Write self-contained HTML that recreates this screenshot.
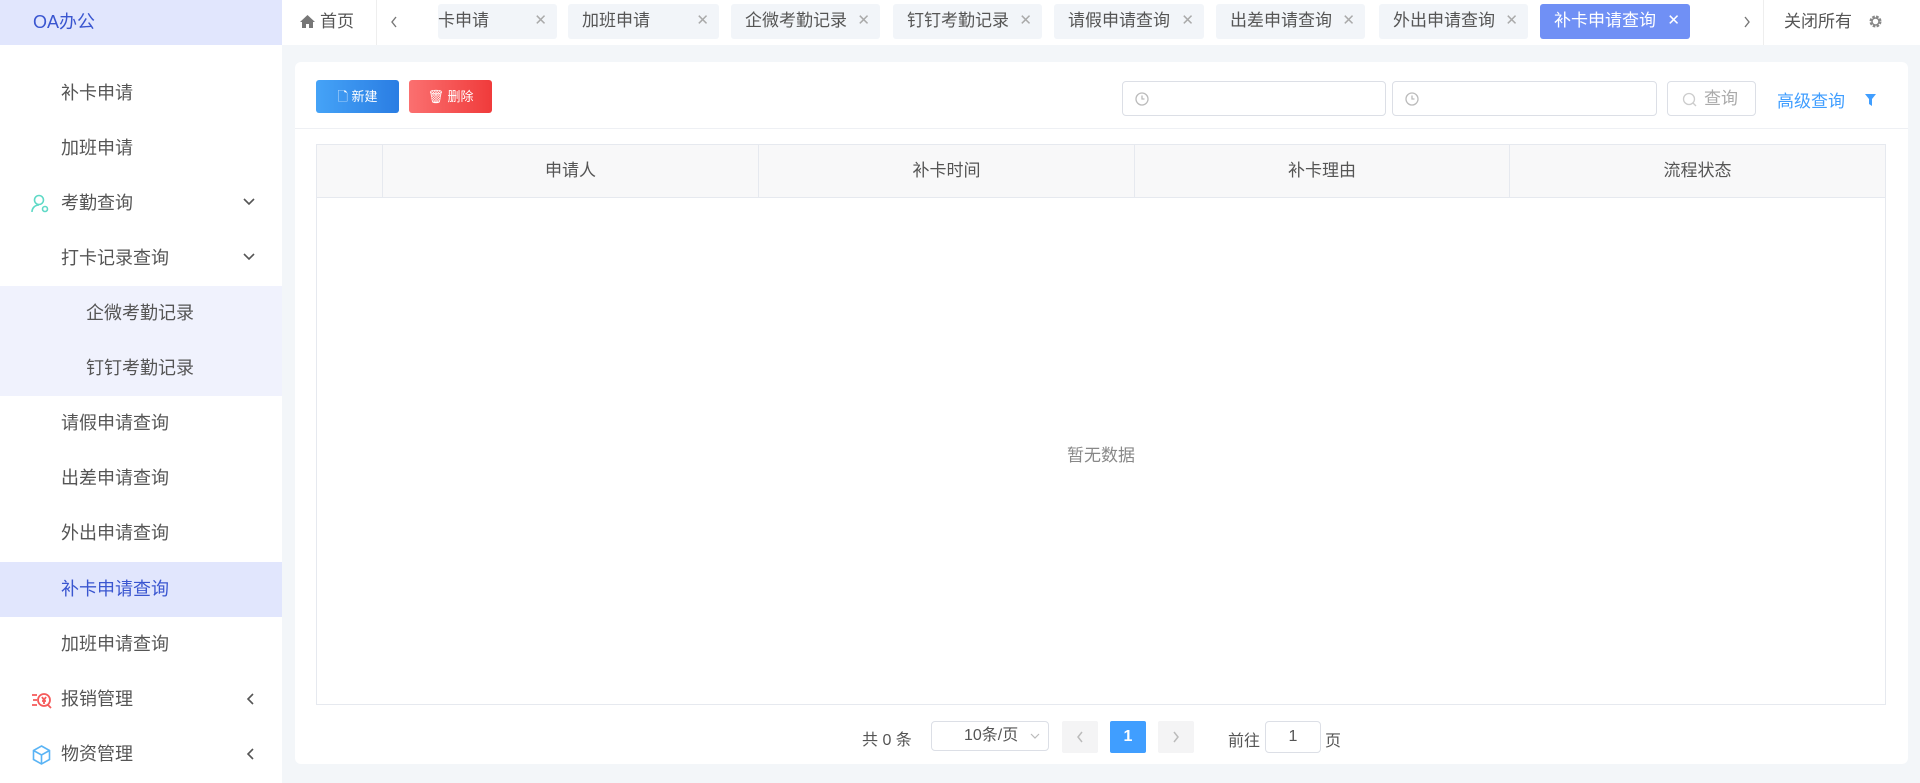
<!DOCTYPE html>
<html><head><meta charset="utf-8"><style>
*{box-sizing:border-box;margin:0;padding:0}
body{width:1920px;height:783px;overflow:hidden;background:#f3f6f9;font-family:"Liberation Sans","Noto Sans CJK SC",sans-serif;color:#555;position:relative}
.abs{position:absolute}
#side{left:0;top:0;width:282px;height:783px;background:#fff}
#logo{left:0;top:0;width:282px;height:45px;background:#e1e6fd;color:#3a56d0;font-size:18px;line-height:45px;padding-left:33px}
.mi{position:absolute;left:0;width:282px;height:55px;line-height:55px;font-size:18px;color:#555}
.chev{position:absolute;right:26px;top:21px}
#top{left:282px;top:0;width:1638px;height:45px;background:#fff}
.tab{position:absolute;top:4px;height:35px;line-height:34px;background:#f2f5f9;border-radius:3px;font-size:17px;color:#555;padding-left:14px}
.tab .x{position:absolute;right:10px;top:0;color:#aaa;font-size:15px}
#card{left:295px;top:62px;width:1613px;height:702px;background:#fff;border-radius:6px}
.btn{position:absolute;top:80px;height:33px;width:83px;border-radius:3px;color:#fff;font-size:13px;line-height:33px;text-align:center}
.inp{position:absolute;top:81px;height:35px;border:1px solid #dcdfe6;border-radius:4px;background:#fff}
.th{position:absolute;top:144px;height:54px;line-height:54px;text-align:center;font-size:17px;color:#555;border-right:1px solid #e6e9ef}
</style></head><body>
<div id="side" class="abs">
<div id="logo" class="abs">OA办公</div>
<div class="mi" style="top:66px;padding-left:61px">补卡申请</div>
<div class="mi" style="top:121px;padding-left:61px">加班申请</div>
<div class="mi" style="top:176px;padding-left:61px"><svg class="abs" style="left:31px;top:18px" width="19" height="19" viewBox="0 0 19 19" fill="none" stroke="#5fd9c6" stroke-width="1.6"><circle cx="8" cy="6" r="4.5"/><path d="M1 18c0-4 3-7 7-7"/><circle cx="14" cy="15" r="2.5"/></svg>考勤查询<svg class="chev" width="14" height="10" viewBox="0 0 14 10"><path d="M2 2l5 5 5-5" fill="none" stroke="#555" stroke-width="1.6"/></svg></div>
<div class="mi" style="top:231px;padding-left:61px">打卡记录查询<svg class="chev" width="14" height="10" viewBox="0 0 14 10"><path d="M2 2l5 5 5-5" fill="none" stroke="#555" stroke-width="1.6"/></svg></div>
<div class="mi" style="top:286px;height:110px;background:#f0f2fd"></div>
<div class="mi" style="top:286px;padding-left:86px">企微考勤记录</div>
<div class="mi" style="top:341px;padding-left:86px">钉钉考勤记录</div>
<div class="mi" style="top:396px;padding-left:61px">请假申请查询</div>
<div class="mi" style="top:451px;padding-left:61px">出差申请查询</div>
<div class="mi" style="top:506px;padding-left:61px">外出申请查询</div>
<div class="mi" style="top:562px;padding-left:61px;background:#e1e6fd;color:#3a56d0">补卡申请查询</div>
<div class="mi" style="top:617px;padding-left:61px">加班申请查询</div>
<div class="mi" style="top:672px;padding-left:61px"><svg class="abs" style="left:31px;top:19px" width="21" height="18" viewBox="0 0 21 18" fill="none" stroke="#f55a5a" stroke-width="1.8"><path d="M1 4h5M2 9h4M1 14h5"/><circle cx="13" cy="9" r="6"/><path d="M11 6l2 3 2-3M11 10h4M13 9v4M17 14l3 3"/></svg>报销管理<svg class="chev" style="top:20px" width="10" height="14" viewBox="0 0 10 14"><path d="M7 2L2 7l5 5" fill="none" stroke="#555" stroke-width="1.6"/></svg></div>
<div class="mi" style="top:727px;padding-left:61px"><svg class="abs" style="left:32px;top:18px" width="19" height="20" viewBox="0 0 19 20" fill="none" stroke="#5ab4f5" stroke-width="1.6"><path d="M9.5 1l8 4.5v9l-8 4.5-8-4.5v-9z M1.5 5.5l8 4.5 8-4.5 M9.5 10v9"/></svg>物资管理<svg class="chev" style="top:20px" width="10" height="14" viewBox="0 0 10 14"><path d="M7 2L2 7l5 5" fill="none" stroke="#555" stroke-width="1.6"/></svg></div>
</div>
<div id="top" class="abs">
<svg class="abs" style="left:18px;top:15px" width="15" height="13" viewBox="0 0 15 13"><path d="M7.5 0L0 7h2v6h4V9h3v4h4V7h2z" fill="#777"/></svg>
<div class="abs" style="left:38px;top:0;line-height:44px;font-size:17px;color:#555">首页</div>
<div class="abs" style="left:94px;top:0;width:1px;height:45px;background:#eee"></div>
<svg class="abs" style="left:108px;top:15px" width="8" height="14" viewBox="0 0 8 14"><path d="M6 2L2 7l4 5" fill="none" stroke="#777" stroke-width="1.4"/></svg>
<div class="tab" style="left:156px;width:119px;padding-left:0">卡申请<span class="x">✕</span></div>
<div class="tab" style="left:286px;width:151px">加班申请<span class="x">✕</span></div>
<div class="tab" style="left:449px;width:149px">企微考勤记录<span class="x">✕</span></div>
<div class="tab" style="left:611px;width:149px">钉钉考勤记录<span class="x">✕</span></div>
<div class="tab" style="left:772px;width:150px">请假申请查询<span class="x">✕</span></div>
<div class="tab" style="left:934px;width:149px">出差申请查询<span class="x">✕</span></div>
<div class="tab" style="left:1097px;width:149px">外出申请查询<span class="x">✕</span></div>
<div class="tab" style="left:1258px;width:150px;background:#7090f5;color:#fff">补卡申请查询<span class="x" style="color:#fff">✕</span></div>
<svg class="abs" style="left:1461px;top:15px" width="8" height="14" viewBox="0 0 8 14"><path d="M2 2l4 5-4 5" fill="none" stroke="#777" stroke-width="1.4"/></svg>
<div class="abs" style="left:1481px;top:0;width:1px;height:45px;background:#eee"></div>
<div class="abs" style="left:1502px;top:0;line-height:44px;font-size:17px;color:#555">关闭所有</div>
<svg class="abs" style="left:1586px;top:14px" width="15" height="15" viewBox="0 0 15 15"><circle cx="7.5" cy="7.5" r="4.5" fill="none" stroke="#888" stroke-width="3" stroke-dasharray="2.4 1.2"/><circle cx="7.5" cy="7.5" r="3.5" fill="none" stroke="#888" stroke-width="1.5"/></svg>
</div>
<div id="card" class="abs"></div>
<div class="btn" style="left:316px;background:linear-gradient(90deg,#45a3f7,#2a7de3)">🗋 新建</div>
<div class="btn" style="left:409px;background:linear-gradient(90deg,#fb7070,#f03b3b)">🗑 删除</div>
<div class="inp" style="left:1122px;width:264px"><svg class="abs" style="left:12px;top:10px" width="14" height="14" viewBox="0 0 14 14" fill="none" stroke="#bbb" stroke-width="1.3"><circle cx="7" cy="7" r="6"/><path d="M7 3.5V7h2.5"/></svg></div>
<div class="inp" style="left:1392px;width:265px"><svg class="abs" style="left:12px;top:10px" width="14" height="14" viewBox="0 0 14 14" fill="none" stroke="#bbb" stroke-width="1.3"><circle cx="7" cy="7" r="6"/><path d="M7 3.5V7h2.5"/></svg></div>
<div class="inp" style="left:1667px;width:89px;line-height:33px;font-size:17px;color:#aaa;padding-left:36px"><svg class="abs" style="left:14px;top:10px" width="15" height="15" viewBox="0 0 15 15"><circle cx="7" cy="7" r="5.5" fill="none" stroke="#ccc" stroke-width="1.3"/><path d="M11 11l3 3" stroke="#ccc" stroke-width="1.3"/></svg>查询</div>
<div class="abs" style="left:1777px;top:87px;font-size:17px;color:#409eff">高级查询</div>
<svg class="abs" style="left:1865px;top:94px" width="11" height="12" viewBox="0 0 11 12"><path d="M0 0h11L7 5v7L4 10V5z" fill="#409eff"/></svg>
<div class="abs" style="left:295px;top:128px;width:1613px;height:1px;background:#eef0f4"></div>
<div class="abs" style="left:316px;top:144px;width:1570px;height:561px;border:1px solid #e6e9ef"></div>
<div class="abs" style="left:317px;top:145px;width:1568px;height:53px;background:#f8f8f9;border-bottom:1px solid #e6e9ef"></div>
<div class="th" style="left:317px;width:66px"></div>
<div class="th" style="left:383px;width:376px">申请人</div>
<div class="th" style="left:759px;width:376px">补卡时间</div>
<div class="th" style="left:1135px;width:375px">补卡理由</div>
<div class="th" style="left:1510px;width:375px;border:none">流程状态</div>
<div class="abs" style="left:1067px;top:441px;font-size:17px;color:#888">暂无数据</div>
<div class="abs" style="left:862px;top:726px;font-size:16px;color:#555">共 0 条</div>
<div class="abs" style="left:931px;top:721px;width:118px;height:30px;border:1px solid #dcdfe6;border-radius:4px;font-size:16px;line-height:28px;padding-left:32px;color:#555">10条/页<svg class="abs" style="right:8px;top:11px" width="10" height="7" viewBox="0 0 10 7"><path d="M1 1l4 4 4-4" fill="none" stroke="#bbb" stroke-width="1.2"/></svg></div>
<div class="abs" style="left:1062px;top:721px;width:36px;height:32px;background:#f4f4f5;border-radius:2px"><svg class="abs" style="left:14px;top:10px" width="8" height="12" viewBox="0 0 8 12"><path d="M6 1L2 6l4 5" fill="none" stroke="#bbb" stroke-width="1.5"/></svg></div>
<div class="abs" style="left:1110px;top:721px;width:36px;height:32px;background:#409eff;border-radius:2px;color:#fff;text-align:center;line-height:32px;font-size:16px;font-weight:bold">1</div>
<div class="abs" style="left:1158px;top:721px;width:36px;height:32px;background:#f4f4f5;border-radius:2px"><svg class="abs" style="left:14px;top:10px" width="8" height="12" viewBox="0 0 8 12"><path d="M2 1l4 5-4 5" fill="none" stroke="#bbb" stroke-width="1.5"/></svg></div>
<div class="abs" style="left:1228px;top:727px;font-size:16px;color:#555">前往</div>
<div class="abs" style="left:1265px;top:721px;width:56px;height:32px;border:1px solid #dcdfe6;border-radius:4px;text-align:center;line-height:30px;font-size:16px;color:#555">1</div>
<div class="abs" style="left:1325px;top:727px;font-size:16px;color:#555">页</div>
</body></html>
